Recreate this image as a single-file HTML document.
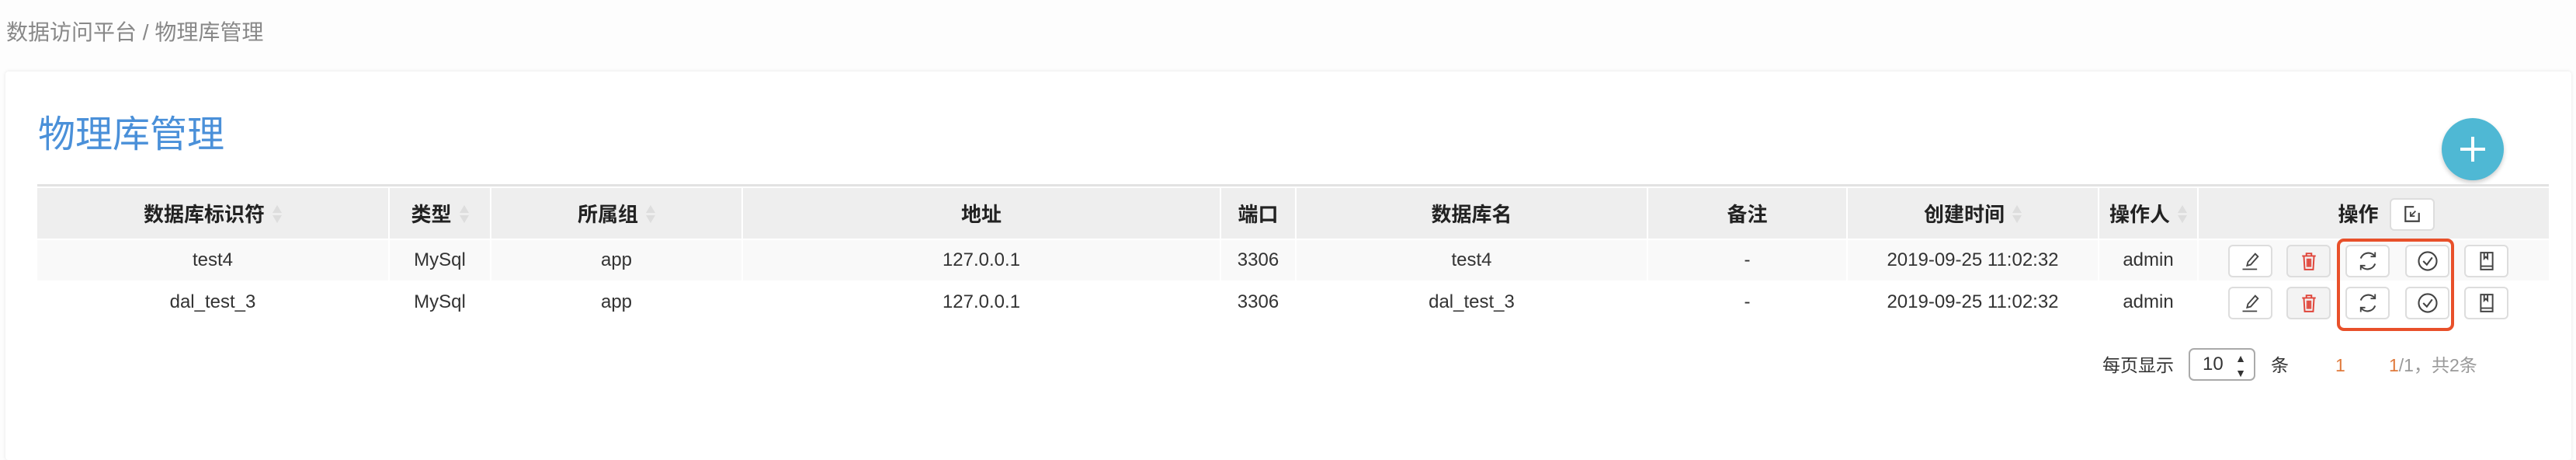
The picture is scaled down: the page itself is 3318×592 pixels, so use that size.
<!DOCTYPE html>
<html><head><meta charset="utf-8"><style>
*{margin:0;padding:0;box-sizing:border-box}
body{width:3318px;height:580px;background:#fdfdfd;font-family:"Liberation Sans","Noto Sans CJK SC",sans-serif;position:relative;overflow:hidden;color:#333}
.bc{position:absolute;left:8px;top:22px;font-size:28px;color:#888;line-height:40px}
.card{position:absolute;left:7px;top:92px;width:3305px;height:500px;background:#fff;border-radius:4px;box-shadow:0 0 5px rgba(0,0,0,.1)}
.title{position:absolute;left:49px;top:146px;font-size:48px;color:#4a90d9;line-height:56px}
.plus{position:absolute;left:3145px;top:152px;width:80px;height:80px;border-radius:50%;background:#4fb8d4;box-shadow:0 3px 6px rgba(0,0,0,.2)}
.plus:before{content:"";position:absolute;left:24px;top:38px;width:32px;height:4px;background:#fff}
.plus:after{content:"";position:absolute;left:38px;top:24px;width:4px;height:32px;background:#fff}
.tline{position:absolute;left:48px;top:237px;width:3235px;height:3px;background:#e2e2e2}
.c{position:absolute;display:flex;align-items:center;justify-content:center;font-size:24px;color:#333}
.h{background:#eee;font-weight:bold;font-size:26px;color:#222}
.r1{background:#f9f9f9}
.sort{display:inline-block;width:12px;height:26px;margin-left:10px;position:relative}
.sort:before{content:"";position:absolute;left:0;top:2px;border:6px solid transparent;border-bottom:10px solid #ddd;border-top:0}
.sort:after{content:"";position:absolute;left:0;top:15px;border:6px solid transparent;border-top:10px solid #ddd;border-bottom:0}
.btn{position:absolute;width:57px;height:42px;border:2px solid #ddd;border-radius:6px;background:#fff;display:flex;align-items:center;justify-content:center}
.del{background:#f3f3f3}
.redbox{position:absolute;left:3010px;top:307px;width:151px;height:119px;border:4px solid #e8502a;border-radius:9px}
.pg{position:absolute;top:452px;font-size:23px;line-height:36px;color:#333}
</style></head><body>
<div class="bc">数据访问平台 / 物理库管理</div>
<div class="card"></div>
<div class="title">物理库管理</div>
<div class="plus"></div>
<div class="tline"></div>

<div class="c h" style="left:48px;top:242px;width:452px;height:65px">数据库标识符<span class="sort"></span></div>
<div class="c h" style="left:502px;top:242px;width:129px;height:65px">类型<span class="sort"></span></div>
<div class="c h" style="left:633px;top:242px;width:322px;height:65px">所属组<span class="sort"></span></div>
<div class="c h" style="left:957px;top:242px;width:614px;height:65px">地址</div>
<div class="c h" style="left:1573px;top:242px;width:95px;height:65px">端口</div>
<div class="c h" style="left:1670px;top:242px;width:451px;height:65px">数据库名</div>
<div class="c h" style="left:2123px;top:242px;width:255px;height:65px">备注</div>
<div class="c h" style="left:2380px;top:242px;width:322px;height:65px">创建时间<span class="sort"></span></div>
<div class="c h" style="left:2704px;top:242px;width:126px;height:65px">操作人<span class="sort"></span></div>
<div class="c h" style="left:2832px;top:242px;width:451px;height:65px"><span style="margin-right:40px">操作</span></div>
<div class="btn" style="left:3078px;top:255px;width:58px;height:42px;border-radius:6px"><svg width="24" height="24" viewBox="0 0 22 22"><path d="M13 2H3v17h16V9" fill="none" stroke="#444" stroke-width="2"/><path d="M9 8v5h5M9 13l6-6" fill="none" stroke="#444" stroke-width="1.6"/></svg></div>

<div class="c r1" style="left:48px;top:309px;width:452px;height:52px">test4</div>
<div class="c r1" style="left:502px;top:309px;width:129px;height:52px">MySql</div>
<div class="c r1" style="left:633px;top:309px;width:322px;height:52px">app</div>
<div class="c r1" style="left:957px;top:309px;width:614px;height:52px">127.0.0.1</div>
<div class="c r1" style="left:1573px;top:309px;width:95px;height:52px">3306</div>
<div class="c r1" style="left:1670px;top:309px;width:451px;height:52px">test4</div>
<div class="c r1" style="left:2123px;top:309px;width:255px;height:52px">-</div>
<div class="c r1" style="left:2380px;top:309px;width:322px;height:52px">2019-09-25 11:02:32</div>
<div class="c r1" style="left:2704px;top:309px;width:126px;height:52px">admin</div>
<div class="c r1" style="left:2832px;top:309px;width:451px;height:52px"></div>

<div class="c" style="left:48px;top:363px;width:452px;height:52px">dal_test_3</div>
<div class="c" style="left:502px;top:363px;width:129px;height:52px">MySql</div>
<div class="c" style="left:633px;top:363px;width:322px;height:52px">app</div>
<div class="c" style="left:957px;top:363px;width:614px;height:52px">127.0.0.1</div>
<div class="c" style="left:1573px;top:363px;width:95px;height:52px">3306</div>
<div class="c" style="left:1670px;top:363px;width:451px;height:52px">dal_test_3</div>
<div class="c" style="left:2123px;top:363px;width:255px;height:52px">-</div>
<div class="c" style="left:2380px;top:363px;width:322px;height:52px">2019-09-25 11:02:32</div>
<div class="c" style="left:2704px;top:363px;width:126px;height:52px">admin</div>

<div class="btn" style="left:2870px;top:315px"><svg width="28" height="28" viewBox="0 0 24 24"><path d="M8 17l1-4 8-9 3 3-8 9z" fill="none" stroke="#444" stroke-width="1.6"/><path d="M3 21h16" stroke="#444" stroke-width="1.6"/></svg></div>
<div class="btn del" style="left:2945px;top:315px"><svg width="24" height="28" viewBox="0 0 22 24"><path d="M3 6h16M8 6V3h6v3M5 6l1 16h10l1-16M9 9v10M11 9v10M13 9v10" fill="none" stroke="#e0453a" stroke-width="1.8"/></svg></div>
<div class="btn" style="left:3021px;top:315px"><svg width="30" height="30" viewBox="0 0 26 26"><path d="M5 10a9 9 0 0 1 16-2M21 16a9 9 0 0 1-16 2" fill="none" stroke="#444" stroke-width="1.8"/><path d="M21 3v5h-5M5 23v-5h5" fill="none" stroke="#444" stroke-width="1.6"/></svg></div>
<div class="btn" style="left:3098px;top:315px"><svg width="30" height="30" viewBox="0 0 26 26"><circle cx="13" cy="13" r="10" fill="none" stroke="#444" stroke-width="1.8"/><path d="M8 13l4 4 6-8" fill="none" stroke="#444" stroke-width="1.8"/></svg></div>
<div class="btn" style="left:3174px;top:315px"><svg width="24" height="28" viewBox="0 0 22 24"><path d="M4 2h14v20H4zM4 18h14M8 2v7l2-2 2 2V2" fill="none" stroke="#444" stroke-width="1.8"/></svg></div>

<div class="btn" style="left:2870px;top:369px"><svg width="28" height="28" viewBox="0 0 24 24"><path d="M8 17l1-4 8-9 3 3-8 9z" fill="none" stroke="#444" stroke-width="1.6"/><path d="M3 21h16" stroke="#444" stroke-width="1.6"/></svg></div>
<div class="btn del" style="left:2945px;top:369px"><svg width="24" height="28" viewBox="0 0 22 24"><path d="M3 6h16M8 6V3h6v3M5 6l1 16h10l1-16M9 9v10M11 9v10M13 9v10" fill="none" stroke="#e0453a" stroke-width="1.8"/></svg></div>
<div class="btn" style="left:3021px;top:369px"><svg width="30" height="30" viewBox="0 0 26 26"><path d="M5 10a9 9 0 0 1 16-2M21 16a9 9 0 0 1-16 2" fill="none" stroke="#444" stroke-width="1.8"/><path d="M21 3v5h-5M5 23v-5h5" fill="none" stroke="#444" stroke-width="1.6"/></svg></div>
<div class="btn" style="left:3098px;top:369px"><svg width="30" height="30" viewBox="0 0 26 26"><circle cx="13" cy="13" r="10" fill="none" stroke="#444" stroke-width="1.8"/><path d="M8 13l4 4 6-8" fill="none" stroke="#444" stroke-width="1.8"/></svg></div>
<div class="btn" style="left:3174px;top:369px"><svg width="24" height="28" viewBox="0 0 22 24"><path d="M4 2h14v20H4zM4 18h14M8 2v7l2-2 2 2V2" fill="none" stroke="#444" stroke-width="1.8"/></svg></div>
<div class="redbox"></div>

<div class="pg" style="left:2708px">每页显示</div>
<div style="position:absolute;left:2819px;top:448px;width:86px;height:42px;border:2px solid #aaa;border-radius:7px;font-size:24px;line-height:38px;padding-left:16px">10<span style="position:absolute;right:10px;font-size:14px;line-height:19px;top:2px">▲<br>▼</span></div>
<div class="pg" style="left:2925px">条</div>
<div class="pg" style="left:3008px;color:#e07a3c">1</div>
<div class="pg" style="left:3077px;color:#999"><span style="color:#e07a3c">1</span>/1，共2条</div>
</body></html>
